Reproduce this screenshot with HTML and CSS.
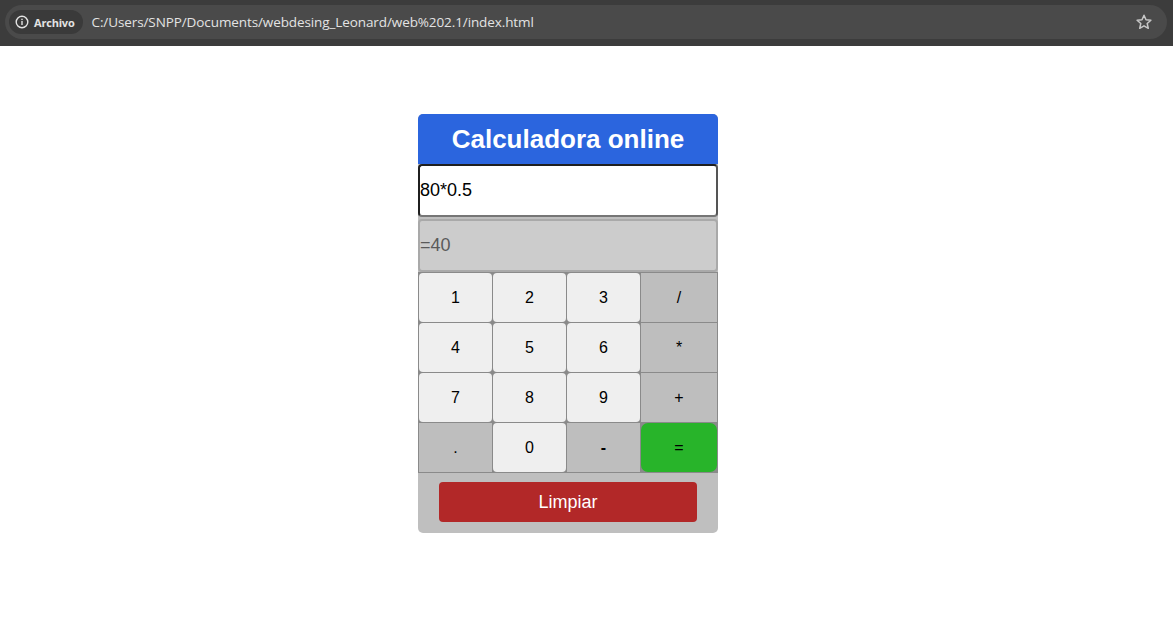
FILE: index.html
```html
<!DOCTYPE html>
<html lang="es">
<head>
<meta charset="utf-8">
<title>Calculadora online</title>
<link rel="stylesheet" href="styles.css">
</head>
<body>
<div class="chrome">
  <div class="omnibox">
    <div class="chip">
      <svg class="info" width="14" height="14" viewBox="0 0 14 14"><circle cx="7" cy="7" r="5.8" fill="none" stroke="#e3e3e3" stroke-width="1.4"/><rect x="6.3" y="6" width="1.4" height="4" fill="#e3e3e3"/><rect x="6.3" y="3.7" width="1.4" height="1.4" fill="#e3e3e3"/></svg>
      <span class="chip-text">Archivo</span>
    </div>
    <span class="url">C:/Users/SNPP/Documents/webdesing_Leonard/web%202.1/index.html</span>
    <svg class="star" width="18" height="18" viewBox="0 0 18 18"><path d="M9 2.2l2 4.5 4.9.5-3.7 3.3 1.1 4.8L9 12.8l-4.3 2.5 1.1-4.8-3.7-3.3 4.9-.5z" fill="none" stroke="#c7c7c7" stroke-width="1.5" stroke-linejoin="round"/></svg>
  </div>
</div>
<main class="page">
  <div class="calc">
    <h1 class="title">Calculadora online</h1>
    <div class="field field-input">80*0.5</div>
    <div class="field field-result">=40</div>
    <div class="keys">
      <button class="key num">1</button>
      <button class="key num">2</button>
      <button class="key num">3</button>
      <button class="key op">/</button>
      <button class="key num">4</button>
      <button class="key num">5</button>
      <button class="key num">6</button>
      <button class="key op">*</button>
      <button class="key num">7</button>
      <button class="key num">8</button>
      <button class="key num">9</button>
      <button class="key op">+</button>
      <button class="key op">.</button>
      <button class="key num">0</button>
      <button class="key op minus">-</button>
      <button class="key eq">=</button>
    </div>
    <div class="footer">
      <button class="clear">Limpiar</button>
    </div>
  </div>
</main>
</body>
</html>
```

FILE: styles.css
```css
html, body {
  margin: 0;
  padding: 0;
  background: #ffffff;
}

.chrome {
  height: 46px;
  background: #3c3c3c;
  padding: 5px 6px 0 5px;
  box-sizing: border-box;
}

.omnibox {
  height: 34px;
  background: #4a4a4a;
  border-radius: 17px;
  display: flex;
  align-items: center;
  padding: 0 14px 0 4px;
  font-family: "Open Sans", "Noto Sans", sans-serif;
}

.chip {
  height: 24px;
  background: #3a3a3a;
  border-radius: 12px;
  display: flex;
  align-items: center;
  gap: 5px;
  padding: 0 8px 0 6px;
  box-sizing: border-box;
}

.info,
.star {
  display: block;
}

.chip-text {
  color: #e3e3e3;
  font-size: 11px;
  font-weight: 700;
  letter-spacing: -0.2px;
}

.url {
  margin-left: 9px;
  color: #e3e3e3;
  font-size: 13.5px;
  flex: 1;
  letter-spacing: -0.1px;
}

.page {
  padding: 68px 0 0 418px;
}

.calc {
  width: 300px;
  background: #bfbfbf;
  border-radius: 5px;
  font-family: "Liberation Sans", Arial, sans-serif;
}

.title {
  margin: 0;
  height: 50px;
  background: #2b65de;
  border-radius: 5px 5px 0 0;
  color: #ffffff;
  font-size: 26px;
  font-weight: 700;
  display: flex;
  align-items: center;
  justify-content: center;
}

.field {
  height: 53px;
  border-radius: 4px;
  display: flex;
  align-items: center;
  font-size: 18px;
  box-sizing: border-box;
}

.field-input {
  background: #ffffff;
  border: 2px solid #1f1f1f;
  border-right-color: #555555;
  border-bottom-color: #767676;
  color: #000000;
}

.field-result {
  margin-top: 2px;
  background: #cccccc;
  border: 2px solid #a9a9a9;
  color: #5a5a5a;
}

.keys {
  display: grid;
  grid-template-columns: 73px 73px 73px 76px;
  grid-auto-rows: 49px;
  gap: 1px;
  background: #8a8a8a;
  border: 1px solid #8a8a8a;
}

.key {
  border: none;
  margin: 0;
  padding: 0;
  display: flex;
  align-items: center;
  justify-content: center;
  font-family: "Liberation Sans", Arial, sans-serif;
  font-size: 16px;
  color: #000000;
  cursor: pointer;
}

.num {
  background: #efefef;
  border-radius: 4px;
}

.op {
  background: #bebebe;
}

.minus {
  font-weight: 700;
}

.eq {
  background: #28b42a;
  border-radius: 7px;
}

.footer {
  height: 60px;
  display: flex;
  justify-content: center;
  padding-top: 9px;
  box-sizing: border-box;
}

.clear {
  width: 258px;
  height: 40px;
  border: none;
  border-radius: 4px;
  background: #b22828;
  color: #ffffff;
  font-family: "Liberation Sans", Arial, sans-serif;
  font-size: 18px;
}
```
